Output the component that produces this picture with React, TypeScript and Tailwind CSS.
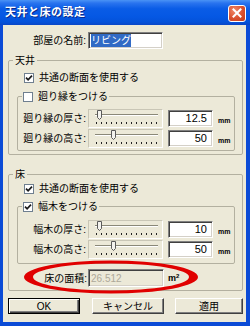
const font = "font-['Liberation_Sans','Noto_Sans_CJK_JP',sans-serif]"

const CheckBox = ({ checked }: { checked: boolean }) => (
  <span className="flex h-[10px] w-[10px] shrink-0 items-center justify-center border border-[#6f7f8f] bg-white">
    {checked && (
      <svg width="8" height="8" viewBox="0 0 8 8">
        <path d="M1 3.6 L3.1 5.8 L7 1.6" stroke="#1a1a1a" strokeWidth="1.7" fill="none" />
      </svg>
    )}
  </span>
)

const Slider = ({ pos }: { pos: number }) => (
  <div className="h-[19px] w-[75px] border border-t-[#c9c6b6] border-l-[#c9c6b6] border-b-white border-r-white">
    <svg width="73" height="17" viewBox="0 0 73 17">
      <rect x="6" y="4" width="63" height="1" fill="#8a8878" />
      <rect x="6" y="5" width="63" height="1" fill="#ffffff" />
      <path
        d={`M${pos} 0.5 H${pos + 4} V7.5 L${pos + 2} 9.5 L${pos} 7.5 Z`}
        fill="#f4f3ee"
        stroke="#5a5a5a"
        strokeWidth="1"
      />
      {Array.from({ length: 13 }).map((_, i) => (
        <rect key={i} x={7 + i * 5} y="12" width="1" height="2" fill="#222" />
      ))}
    </svg>
  </div>
)

const sunken =
  "border border-t-[#808080] border-l-[#808080] border-b-white border-r-white shadow-[inset_1px_1px_0_#404040,inset_-1px_-1px_0_#d4d0c8]"

const SliderRow = ({ label, pos, value }: { label: string; pos: number; value: string }) => (
  <div className="flex h-[19px] items-center">
    <span className="w-[68px] text-right">{label}</span>
    <div className="ml-[2px]">
      <Slider pos={pos} />
    </div>
    <div className={`ml-[5px] flex h-[17px] w-[45px] items-center justify-end bg-white pr-[5px] text-[11px] ${sunken}`}>
      {value}
    </div>
    <span className="ml-[5px] mt-[3px] text-[7px] font-bold leading-none">mm</span>
  </div>
)

const Button = ({ label, primary, width }: { label: string; primary?: boolean; width: string }) => (
  <div
    className={`flex h-[16px] items-center justify-center bg-[#ece9d8] text-[10px] ${width} ${
      primary
        ? "border border-black shadow-[inset_1px_1px_0_#fff,inset_-1px_-1px_0_#404040,inset_-2px_-2px_0_#808080]"
        : "border border-t-white border-l-white border-r-[#404040] border-b-[#404040] shadow-[inset_-1px_-1px_0_#808080]"
    }`}
  >
    {label}
  </div>
)

export default function App() {
  return (
    <div className={`relative flex h-[326px] w-[250px] flex-col bg-[#0b4bd6] text-[10px] leading-[13px] text-black ${font}`}>
      <div className="flex h-[25px] shrink-0 items-center justify-between bg-[linear-gradient(to_bottom,#4a93f5_0%,#2a74ef_12%,#0a5ce6_35%,#0558e4_65%,#0452da_88%,#0a46c6_100%)] pl-[5px] pr-[4px]">
        <span className="text-[11px] font-bold tracking-[0.5px] text-white [text-shadow:1px_1px_0_#0a2a8a]">天井と床の設定</span>
        <div className="mt-[1px] flex h-[17px] w-[18px] items-center justify-center rounded-[3px] border border-white bg-[radial-gradient(circle_at_35%_30%,#f08a6a,#d9502e_55%,#c23a18)]">
          <svg width="10" height="10" viewBox="0 0 10 10">
            <path d="M1.5 1.5 L8.5 8.5 M8.5 1.5 L1.5 8.5" stroke="#fff" strokeWidth="2" strokeLinecap="square" />
          </svg>
        </div>
      </div>

      <div className="mb-[4px] ml-[3px] mr-[4px] flex flex-1 flex-col bg-[#ece9d8]">
        <div className="mt-[7px] flex h-[17px] items-center">
          <span className="w-[83px] text-right">部屋の名前:</span>
          <div className={`ml-[2px] flex h-[17px] w-[75px] items-center bg-white pl-[2px] ${sunken}`}>
            <span className="bg-[#316ac5] text-white">リビング</span>
          </div>
        </div>

        <fieldset className="ml-[5px] mt-[5px] w-[235px] rounded-[2px] border border-[#b3b0a0] pb-[3px]">
          <legend className="ml-[4px] px-[2px]">天井</legend>
          <div className="ml-[15px] mt-[4px] flex h-[13px] items-center gap-[5px]">
            <CheckBox checked />
            <span>共通の断面を使用する</span>
          </div>
          <fieldset className="ml-[8px] mt-[6px] w-[218px] rounded-[2px] border border-[#b3b0a0] pb-[2px] pt-[6px]">
            <legend className="ml-[4px] px-[1px]">
              <span className="flex items-center gap-[5px]">
                <CheckBox checked={false} />
                <span>廻り縁をつける</span>
              </span>
            </legend>
            <div className="flex flex-col gap-[1px]">
              <SliderRow label="廻り縁の厚さ:" pos={8.5} value="12.5" />
              <SliderRow label="廻り縁の高さ:" pos={22.5} value="50" />
            </div>
          </fieldset>
        </fieldset>

        <fieldset className="ml-[5px] mt-[13px] w-[235px] rounded-[2px] border border-[#b3b0a0] pb-[3px]">
          <legend className="ml-[4px] px-[2px]">床</legend>
          <div className="ml-[15px] mt-[1px] flex h-[13px] items-center gap-[5px]">
            <CheckBox checked />
            <span>共通の断面を使用する</span>
          </div>
          <fieldset className="ml-[8px] mt-[5px] w-[218px] rounded-[2px] border border-[#b3b0a0] pb-[4px] pt-[7px]">
            <legend className="ml-[4px] px-[1px]">
              <span className="flex items-center gap-[5px]">
                <CheckBox checked />
                <span>幅木をつける</span>
              </span>
            </legend>
            <div className="flex flex-col gap-[1px]">
              <SliderRow label="幅木の厚さ:" pos={8.5} value="10" />
              <SliderRow label="幅木の高さ:" pos={22.5} value="50" />
            </div>
          </fieldset>
          <div className="mt-[5px] flex h-[18px] items-center">
            <span className="w-[78px] text-right">床の面積:</span>
            <div className={`ml-[1px] flex h-[18px] w-[76px] items-center bg-[#ece9d8] pl-[2px] text-[10px] text-[#aca899] ${sunken}`}>
              26.512
            </div>
            <span className="ml-[4px] text-[9px] font-bold leading-none">
              m<sup className="text-[6px]">2</sup>
            </span>
          </div>
        </fieldset>

        <div className="ml-[5px] mt-[7px] flex">
          <Button label="OK" primary width="w-[72px]" />
          <div className="ml-[12px]">
            <Button label="キャンセル" width="w-[72px]" />
          </div>
          <div className="ml-[11px]">
            <Button label="適用" width="w-[68px]" />
          </div>
        </div>
      </div>

      <svg className="absolute left-[23px] top-[260px]" width="176" height="34" viewBox="0 0 176 34">
        <path
          fillRule="evenodd"
          fill="#e00000"
          d="M1 17 A87 16.5 0 1 0 175 17 A87 16.5 0 1 0 1 17 Z M10 17 A78 13.5 0 1 0 166 17 A78 13.5 0 1 0 10 17 Z"
        />
      </svg>
    </div>
  )
}
